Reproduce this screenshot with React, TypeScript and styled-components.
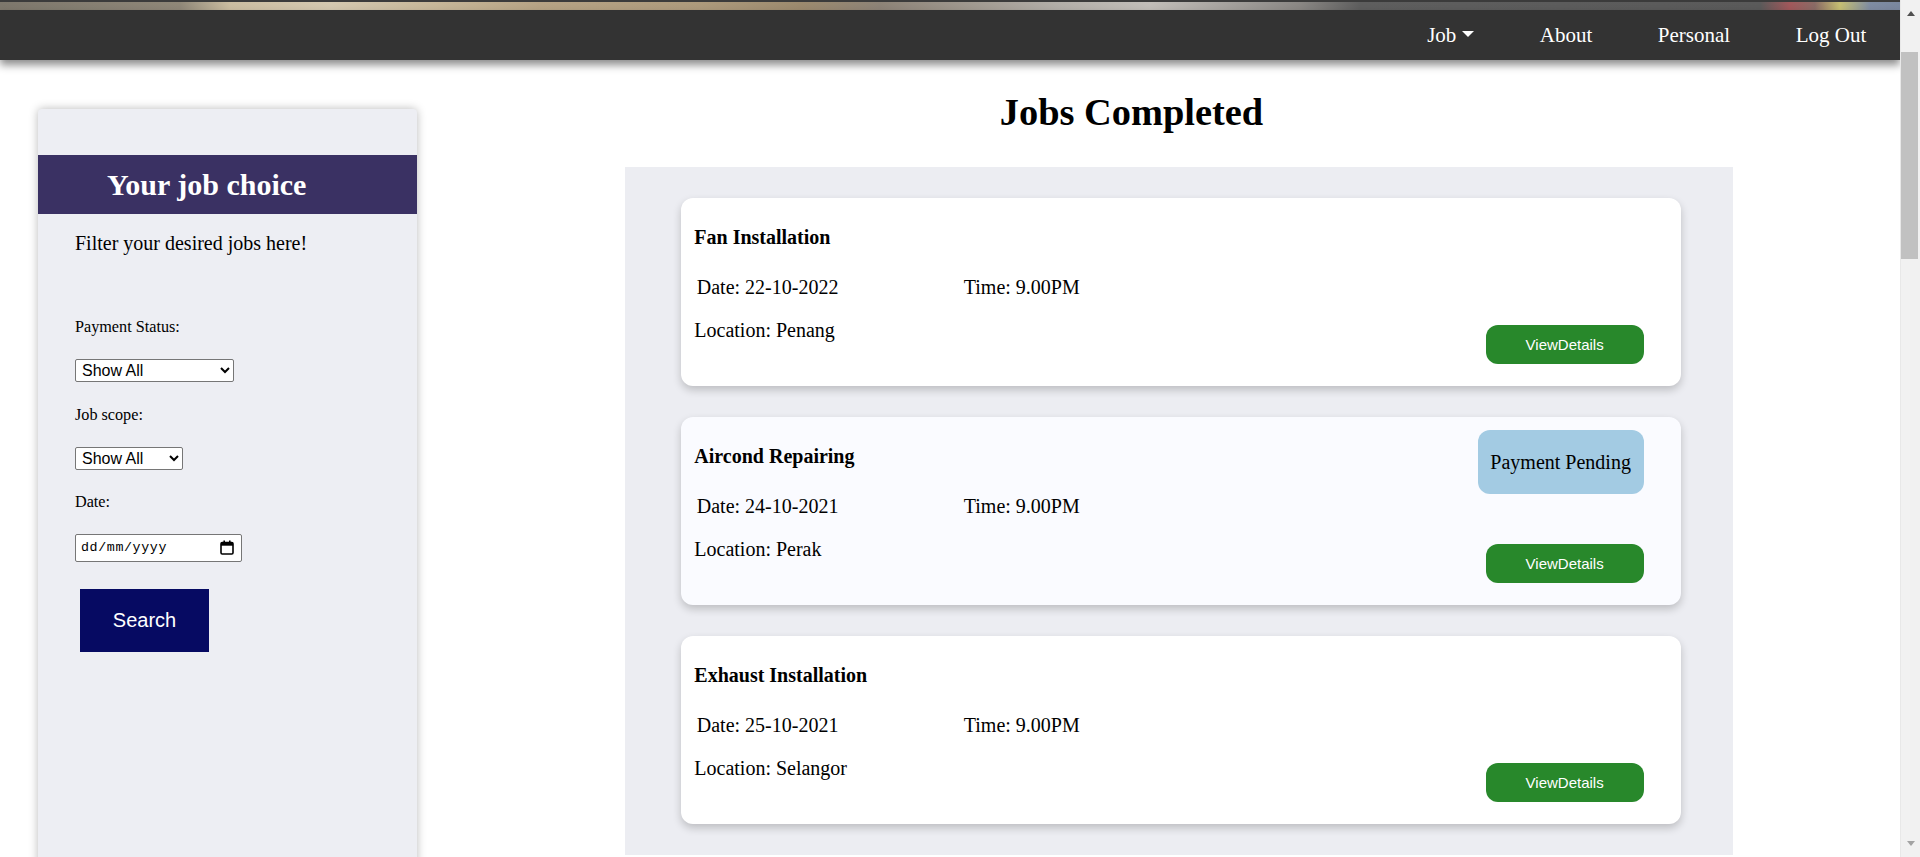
import React from "react";
import styled, { createGlobalStyle } from "styled-components";

const GlobalStyle = createGlobalStyle`
  body {
    margin: 0;
    background: #ffffff;
    color: #000000;
    font-family: "Liberation Serif", "Times New Roman", serif;
  }
`;

const Page = styled.div`
  margin-right: 20px;
  min-height: 3262px;
`;

const TopStrip = styled.div`
  height: 10px;
  background:
    linear-gradient(to bottom, #3b3b3b 0 2px, transparent 2px),
    linear-gradient(
      to right,
      #7d776c 0px,
      #8f8778 180px,
      #cbbda1 230px,
      #d4c8b0 330px,
      #c6b698 440px,
      #b6a385 540px,
      #ad9a7c 700px,
      #9c8a6e 800px,
      #8d8377 880px,
      #b3afa9 1060px,
      #c2beb9 1150px,
      #8a8784 1300px,
      #5e5e5e 1360px,
      #5a5a5a 1760px,
      #a1585b 1790px,
      #8a6b66 1815px,
      #c6bf72 1840px,
      #7f8ca3 1870px,
      #7a879e 1900px
    );
`;

const NavBar = styled.nav`
  position: relative;
  z-index: 2;
  height: 50px;
  background: #333333;
  display: flex;
  justify-content: flex-end;
  align-items: center;
  padding-right: 1px;
  box-shadow: 0 5px 8px rgba(0, 0, 0, 0.45);
`;

const NavLink = styled.a`
  display: flex;
  align-items: center;
  gap: 6px;
  padding: 0 32.75px;
  color: #ffffff;
  font-size: 21px;
  text-decoration: none;
  cursor: pointer;
`;

const Caret = styled.svg`
  width: 12px;
  height: 6px;
  margin-top: -2px;
`;

const Layout = styled.div`
  display: flex;
  align-items: flex-start;
`;

const Sidebar = styled.aside`
  box-sizing: border-box;
  margin: 49px 0 0 38px;
  width: 379px;
  min-height: 3153px;
  padding-top: 46px;
  background: #edeef3;
  border-radius: 4px 4px 0 0;
  box-shadow: 0 0 10px rgba(0, 0, 0, 0.28);
`;

const SidebarHeader = styled.h2`
  margin: 0;
  height: 59px;
  display: flex;
  align-items: center;
  padding-left: 69px;
  background: #3a3163;
  color: #ffffff;
  font-size: 30px;
  font-weight: bold;
`;

const FilterBody = styled.form`
  display: flex;
  flex-direction: column;
  align-items: flex-start;
  padding: 18px 37px 0;
`;

const Intro = styled.p`
  margin: 0 0 63px;
  font-size: 20px;
  line-height: 23px;
`;

const FieldLabel = styled.label`
  font-size: 16.2px;
  line-height: 18px;
`;

const Select = styled.select<{ $w: number }>`
  box-sizing: border-box;
  margin: 23px 0 23.5px;
  width: ${(p) => p.$w}px;
  height: 23px;
  padding: 0 2px;
  border: 1px solid #767676;
  border-radius: 2px;
  background: #ffffff;
  color: #000000;
  font-family: "Liberation Sans", Arial, sans-serif;
  font-size: 16px;
`;

const DateBox = styled.div`
  box-sizing: border-box;
  margin-top: 23px;
  width: 167px;
  height: 27.5px;
  display: flex;
  align-items: center;
  justify-content: space-between;
  padding: 0 7px 0 5px;
  border: 1px solid #767676;
  border-radius: 2px;
  background: #ffffff;
`;

const DateText = styled.input`
  width: 100px;
  padding: 0;
  border: none;
  outline: none;
  background: transparent;
  font-family: "Liberation Mono", "DejaVu Sans Mono", monospace;
  font-size: 13.33px;
  letter-spacing: 0.6px;
  color: #000000;
  &::placeholder { color: #000000; opacity: 1; }
`;

const SearchButton = styled.button`
  margin: 27.5px 0 0 5px;
  width: 129px;
  height: 63px;
  border: none;
  background: #060a62;
  color: #ffffff;
  font-family: "Liberation Sans", Arial, sans-serif;
  font-size: 20px;
  cursor: pointer;
`;

const MainColumn = styled.main`
  width: 1429px;
  display: flex;
  flex-direction: column;
`;

const PageTitle = styled.h1`
  margin: 30px 0 32.7px;
  text-align: center;
  font-size: 38.4px;
  line-height: 44px;
  font-weight: bold;
`;

const JobsPanel = styled.section`
  box-sizing: border-box;
  margin-left: 208px;
  width: 1108px;
  padding: 31px 52px 31px 56px;
  display: flex;
  flex-direction: column;
  gap: 31px;
  background: #ecedf2;
`;

const Card = styled.article<{ $tint?: boolean }>`
  position: relative;
  padding: 28.75px 37.4px 21.6px 13.3px;
  border-radius: 12px;
  background: ${(p) => (p.$tint ? "#fafbff" : "#ffffff")};
  box-shadow: 0 4px 8px rgba(0, 0, 0, 0.2);
`;

const CardTitle = styled.h3`
  margin: 0 0 26.7px;
  font-size: 20px;
  line-height: 23px;
  font-weight: bold;
`;

const InfoRow = styled.div`
  display: flex;
  padding-left: 2.5px;
  margin-bottom: 20.3px;
  font-size: 20px;
  line-height: 23px;
`;

const DateCell = styled.span`
  width: 267px;
`;

const BottomRow = styled.div`
  display: flex;
  justify-content: space-between;
  align-items: flex-start;
  font-size: 20px;
  line-height: 23px;
`;

const ViewButton = styled.button`
  margin-top: 5.7px;
  width: 158px;
  height: 39px;
  border: none;
  border-radius: 12px;
  background: #28882b;
  color: #ffffff;
  font-family: "Liberation Sans", Arial, sans-serif;
  font-size: 15px;
  cursor: pointer;
`;

const StatusBadge = styled.div`
  position: absolute;
  top: 13px;
  right: 37.4px;
  width: 166px;
  height: 64.7px;
  display: flex;
  align-items: center;
  justify-content: center;
  border-radius: 12px;
  background: #a3cbe3;
  font-size: 20px;
`;

/* window scrollbar drawn over the right edge of the page */
const ScrollTrack = styled.div`
  position: fixed;
  top: 0;
  right: 0;
  z-index: 10;
  box-sizing: border-box;
  width: 20px;
  height: 100vh;
  display: flex;
  flex-direction: column;
  align-items: center;
  background: #f1f1f1;
  border-left: 1px solid #e8e8e8;
`;

const ScrollArrow = styled.svg<{ $bottom?: boolean }>`
  width: 8px;
  height: 5px;
  flex: none;
  margin: ${(p) => (p.$bottom ? "auto 0 11px" : "11px 0 0")};
`;

const ScrollThumb = styled.div`
  align-self: flex-start;
  margin-top: 36px;
  width: 17px;
  height: 207px;
  background: #c1c1c1;
`;

type Job = {
  title: string;
  date: string;
  time: string;
  location: string;
  pending?: boolean;
};

const jobs: Job[] = [
  { title: "Fan Installation", date: "22-10-2022", time: "9.00PM", location: "Penang" },
  { title: "Aircond Repairing", date: "24-10-2021", time: "9.00PM", location: "Perak", pending: true },
  { title: "Exhaust Installation", date: "25-10-2021", time: "9.00PM", location: "Selangor" },
];

const CalendarIcon = () => (
  <svg width="14" height="15" viewBox="0 0 14 15" aria-hidden="true">
    <rect x="1" y="2.5" width="12" height="11.5" rx="1.2" fill="none" stroke="#000" strokeWidth="1.6" />
    <rect x="1" y="2.5" width="12" height="3.2" fill="#000" />
    <rect x="3.4" y="0.5" width="1.6" height="3" fill="#000" />
    <rect x="9" y="0.5" width="1.6" height="3" fill="#000" />
  </svg>
);

export default function App() {
  return (
    <>
      <GlobalStyle />
      <Page>
        <TopStrip />
        <NavBar>
          <NavLink>
            Job
            <Caret viewBox="0 0 12 6" aria-hidden="true">
              <polygon points="0,0 12,0 6,6" fill="#ffffff" />
            </Caret>
          </NavLink>
          <NavLink>About</NavLink>
          <NavLink>Personal</NavLink>
          <NavLink>Log Out</NavLink>
        </NavBar>
        <Layout>
          <Sidebar>
            <SidebarHeader>Your job choice</SidebarHeader>
            <FilterBody onSubmit={(e) => e.preventDefault()}>
              <Intro>Filter your desired jobs here!</Intro>
              <FieldLabel htmlFor="payment">Payment Status:</FieldLabel>
              <Select id="payment" $w={159} defaultValue="all">
                <option value="all">Show All</option>
                <option value="pending">Payment Pending</option>
                <option value="done">Paid</option>
              </Select>
              <FieldLabel htmlFor="scope">Job scope:</FieldLabel>
              <Select id="scope" $w={108} defaultValue="all">
                <option value="all">Show All</option>
                <option value="fan">Fan</option>
              </Select>
              <FieldLabel htmlFor="date">Date:</FieldLabel>
              <DateBox>
                <DateText id="date" placeholder="dd/mm/yyyy" readOnly />
                <CalendarIcon />
              </DateBox>
              <SearchButton type="submit">Search</SearchButton>
            </FilterBody>
          </Sidebar>
          <MainColumn>
            <PageTitle>Jobs Completed</PageTitle>
            <JobsPanel>
              {jobs.map((job) => (
                <Card key={job.title} $tint={job.pending}>
                  {job.pending && <StatusBadge>Payment Pending</StatusBadge>}
                  <CardTitle>{job.title}</CardTitle>
                  <InfoRow>
                    <DateCell>Date: {job.date}</DateCell>
                    <span>Time: {job.time}</span>
                  </InfoRow>
                  <BottomRow>
                    <span>Location: {job.location}</span>
                    <ViewButton>ViewDetails</ViewButton>
                  </BottomRow>
                </Card>
              ))}
            </JobsPanel>
          </MainColumn>
        </Layout>
      </Page>
      <ScrollTrack aria-hidden="true">
        <ScrollArrow viewBox="0 0 8 5">
          <polygon points="4,0 8,5 0,5" fill="#505050" />
        </ScrollArrow>
        <ScrollThumb />
        <ScrollArrow viewBox="0 0 8 5" $bottom>
          <polygon points="0,0 8,0 4,5" fill="#a3a3a3" />
        </ScrollArrow>
      </ScrollTrack>
    </>
  );
}
